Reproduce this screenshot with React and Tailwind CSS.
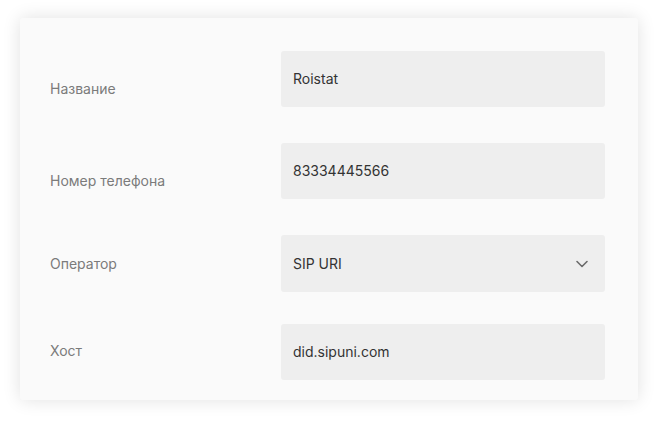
import React from 'react';

const rows = [
  { label: 'Название', value: 'Roistat', labelPad: 'pt-[28px]', gap: 'mb-[36px]' },
  { label: 'Номер телефона', value: '83334445566', labelPad: 'pt-[28px]', gap: 'mb-[36px]' },
  { label: 'Оператор', value: 'SIP URI', labelPad: 'pt-[19px]', gap: 'mb-[32px]', select: true, tall: true },
  { label: 'Хост', value: 'did.sipuni.com', labelPad: 'pt-[17px]', gap: '' },
];

function Chevron() {
  return (
    <svg width="14" height="14" viewBox="0 0 14 14" fill="none" className="text-[#6b6b6b]">
      <path d="M2 4.5 L7 9.5 L12 4.5" stroke="currentColor" strokeWidth="1.6" strokeLinecap="round" strokeLinejoin="round" />
    </svg>
  );
}

export default function App() {
  return (
    <div className="w-[659px] h-[422px] bg-white pt-[18px] pl-[20px]" style={{ fontFamily: 'Inter, "Noto Sans", sans-serif' }}>
      <div className="w-[618px] h-[382px] bg-[#fafafa] rounded-[3px] shadow-[0_0_18px_rgba(0,0,0,0.12)] pt-[33px] pl-[30px] pr-[33px] pb-[20px]">
        {rows.map((r) => (
          <div key={r.label} className={`flex ${r.gap}`}>
            <div className={`w-[231px] shrink-0 text-[14px] leading-[20px] text-[#7b7b7b] ${r.labelPad}`}>{r.label}</div>
            <div className={`w-[324px] ${r.tall ? 'h-[57px]' : 'h-[56px]'} bg-[#eeeeee] rounded-[3px] flex items-center justify-between pl-[12px] pr-[16px]`}>
              <span className="text-[14px] leading-[20px] text-[#333333]">{r.value}</span>
              {r.select && <Chevron />}
            </div>
          </div>
        ))}
      </div>
    </div>
  );
}
